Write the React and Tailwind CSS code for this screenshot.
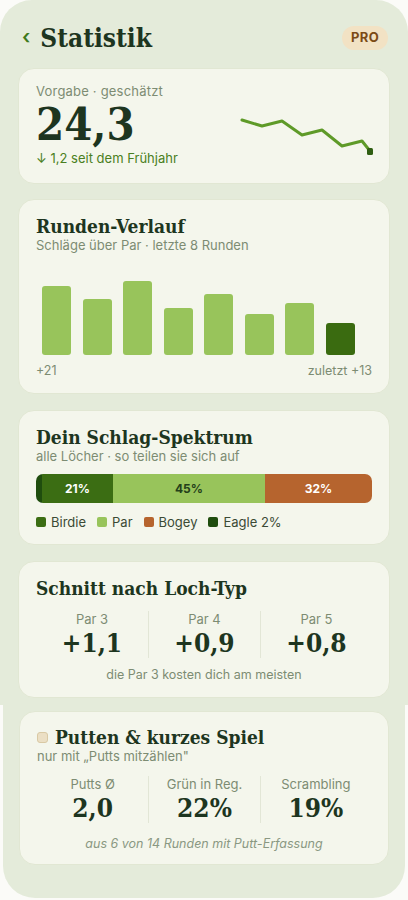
import React from "react";

const serif = { fontFamily: "'DejaVu Serif', 'Liberation Serif', serif", fontStretch: "condensed" };

const bars = [69, 56, 74, 47, 61, 41, 52, 32];

function Card({ children, className = "" }) {
  return (
    <div className={`rounded-[16px] border border-[#e1e7d3] bg-[#f4f6ec] ${className}`}>
      {children}
    </div>
  );
}

function Sparkline() {
  const pts = "2,3 22,9 42,4 62,18 82,13 102,29 122,24 130,34";
  return (
    <svg width="136" height="40" viewBox="0 0 136 40" className="block">
      <polyline points={pts} fill="none" stroke="#5e9a28" strokeWidth="3" strokeLinejoin="round" strokeLinecap="round" />
      <rect x="127" y="31" width="6" height="7" rx="1.5" fill="#2f5e12" />
    </svg>
  );
}

function Stat({ label, value, first }) {
  return (
    <div className={`flex flex-col items-center ${first ? "" : "border-l border-[#e2e6d6]"}`}>
      <span className="text-[13px] leading-[16px] text-[#7d8c73]">{label}</span>
      <span style={serif} className="mt-[1px] text-[26px] leading-[30px] font-bold text-[#1d3520]">
        {value}
      </span>
    </div>
  );
}

export default function App() {
  return (
    <div className="min-h-[900px] bg-[#fbfbf8]" style={{ fontFamily: "Inter, 'Noto Sans', sans-serif" }}>
      <div className="rounded-t-[32px] bg-[#e4ebda] px-[18px] pt-[22px] pb-[7px]">
        {/* header */}
        <div className="flex items-center justify-between pl-[4px] pr-[2px]">
          <div className="flex items-center gap-[10px]">
            <span className="text-[20px] leading-none text-[#3f7a1c] font-semibold -mt-[2px]">‹</span>
            <h1 style={serif} className="text-[26px] leading-[32px] font-bold text-[#1d3520]">Statistik</h1>
          </div>
          <span className="rounded-full bg-[#f2e2c4] px-[9px] py-[2px] text-[13px] font-bold tracking-wide text-[#7b4a16]">
            PRO
          </span>
        </div>

        {/* Vorgabe */}
        <Card className="mt-[14px] h-[116px] px-[17px] pt-[14px]">
          <div className="text-[13px] leading-[16px] tracking-[0.2px] text-[#7d8c73]">Vorgabe · geschätzt</div>
          <div className="flex items-end justify-between">
            <div>
              <div style={serif} className="text-[45px] leading-[51px] font-bold text-[#1d3520]">24,3</div>
              <div className="text-[13px] leading-[16px] text-[#4a7f22]">↓ 1,2 seit dem Frühjahr</div>
            </div>
            <div className="mb-[9px] mr-[-4px]">
              <Sparkline />
            </div>
          </div>
        </Card>

        {/* Runden-Verlauf */}
        <Card className="mt-[15px] h-[195px] px-[17px] pt-[15px]">
          <h2 style={serif} className="text-[19px] leading-[22px] font-bold text-[#1d3520]">Runden-Verlauf</h2>
          <div className="text-[13px] leading-[16px] text-[#7d8c73]">Schläge über Par · letzte 8 Runden</div>
          <div className="mt-[28px] flex h-[74px] items-end gap-[11.5px] pl-[6px]">
            {bars.map((h, i) => (
              <div
                key={i}
                className={`w-[29px] rounded-[3px] ${i === 7 ? "bg-[#3a6b10]" : "bg-[#98c45b]"}`}
                style={{ height: h }}
              />
            ))}
          </div>
          <div className="mt-[8px] flex justify-between text-[12.5px] leading-[16px] text-[#7d8c73]">
            <span>+21</span>
            <span>zuletzt +13</span>
          </div>
        </Card>

        {/* Schlag-Spektrum */}
        <Card className="mt-[16px] h-[135px] px-[17px] pt-[15px]">
          <h2 style={serif} className="text-[19px] leading-[22px] font-bold text-[#1d3520]">Dein Schlag-Spektrum</h2>
          <div className="text-[13px] leading-[16px] text-[#7d8c73]">alle Löcher · so teilen sie sich auf</div>
          <div className="mt-[10px] flex h-[29px] overflow-hidden rounded-[7px] text-[12px] font-bold">
            <div className="w-[6px] bg-[#1f4d0e]" />
            <div className="flex w-[71px] items-center justify-center bg-[#3b6d13] text-white">21%</div>
            <div className="flex w-[152px] items-center justify-center bg-[#98c45b] text-[#24401a]">45%</div>
            <div className="flex flex-1 items-center justify-center bg-[#b6642e] text-white">32%</div>
          </div>
          <div className="mt-[11px] flex items-center gap-[11px] text-[13px] leading-[16px] text-[#3b4a35]">
            {[
              ["bg-[#3b6d13]", "Birdie"],
              ["bg-[#98c45b]", "Par"],
              ["bg-[#b6642e]", "Bogey"],
              ["bg-[#1f4d0e]", "Eagle 2%"],
            ].map(([c, t]) => (
              <span key={t} className="flex items-center gap-[5px]">
                <span className={`h-[10px] w-[10px] rounded-[2px] ${c}`} />
                {t}
              </span>
            ))}
          </div>
        </Card>

        {/* Loch-Typ */}
        <Card className="mt-[16px] h-[137px] px-[17px] pt-[15px]">
          <h2 style={serif} className="text-[19px] leading-[22px] font-bold text-[#1d3520]">Schnitt nach Loch-Typ</h2>
          <div className="mt-[11px] grid grid-cols-3 pt-[1px]">
            <Stat label="Par 3" value="+1,1" first />
            <Stat label="Par 4" value="+0,9" />
            <Stat label="Par 5" value="+0,8" />
          </div>
          <div className="mt-[9px] text-center text-[12.5px] leading-[16px] text-[#7d8c73]">die Par 3 kosten dich am meisten</div>
        </Card>
      </div>

      <div className="mx-[3px] rounded-b-[32px] bg-[#e4ebda] px-[16px] pt-[6px] pb-[33px]">
        <Card className="h-[154px] px-[17px] pt-[14px]">
          <div className="flex items-center gap-[7px]">
            <span className="h-[11px] w-[11px] rounded-[3px] border border-[#d9c9a4] bg-[#ebdfc4]" />
            <h2 style={serif} className="text-[19px] leading-[22px] font-bold text-[#1d3520]">Putten &amp; kurzes Spiel</h2>
          </div>
          <div className="text-[13px] leading-[16px] text-[#7d8c73]">nur mit „Putts mitzählen"</div>
          <div className="mt-[12px] grid grid-cols-3">
            <Stat label="Putts Ø" value="2,0" first />
            <Stat label="Grün in Reg." value="22%" />
            <Stat label="Scrambling" value="19%" />
          </div>
          <div className="mt-[13px] text-center text-[12.5px] italic leading-[16px] text-[#8a9882]">
            aus 6 von 14 Runden mit Putt-Erfassung
          </div>
        </Card>
      </div>
    </div>
  );
}
